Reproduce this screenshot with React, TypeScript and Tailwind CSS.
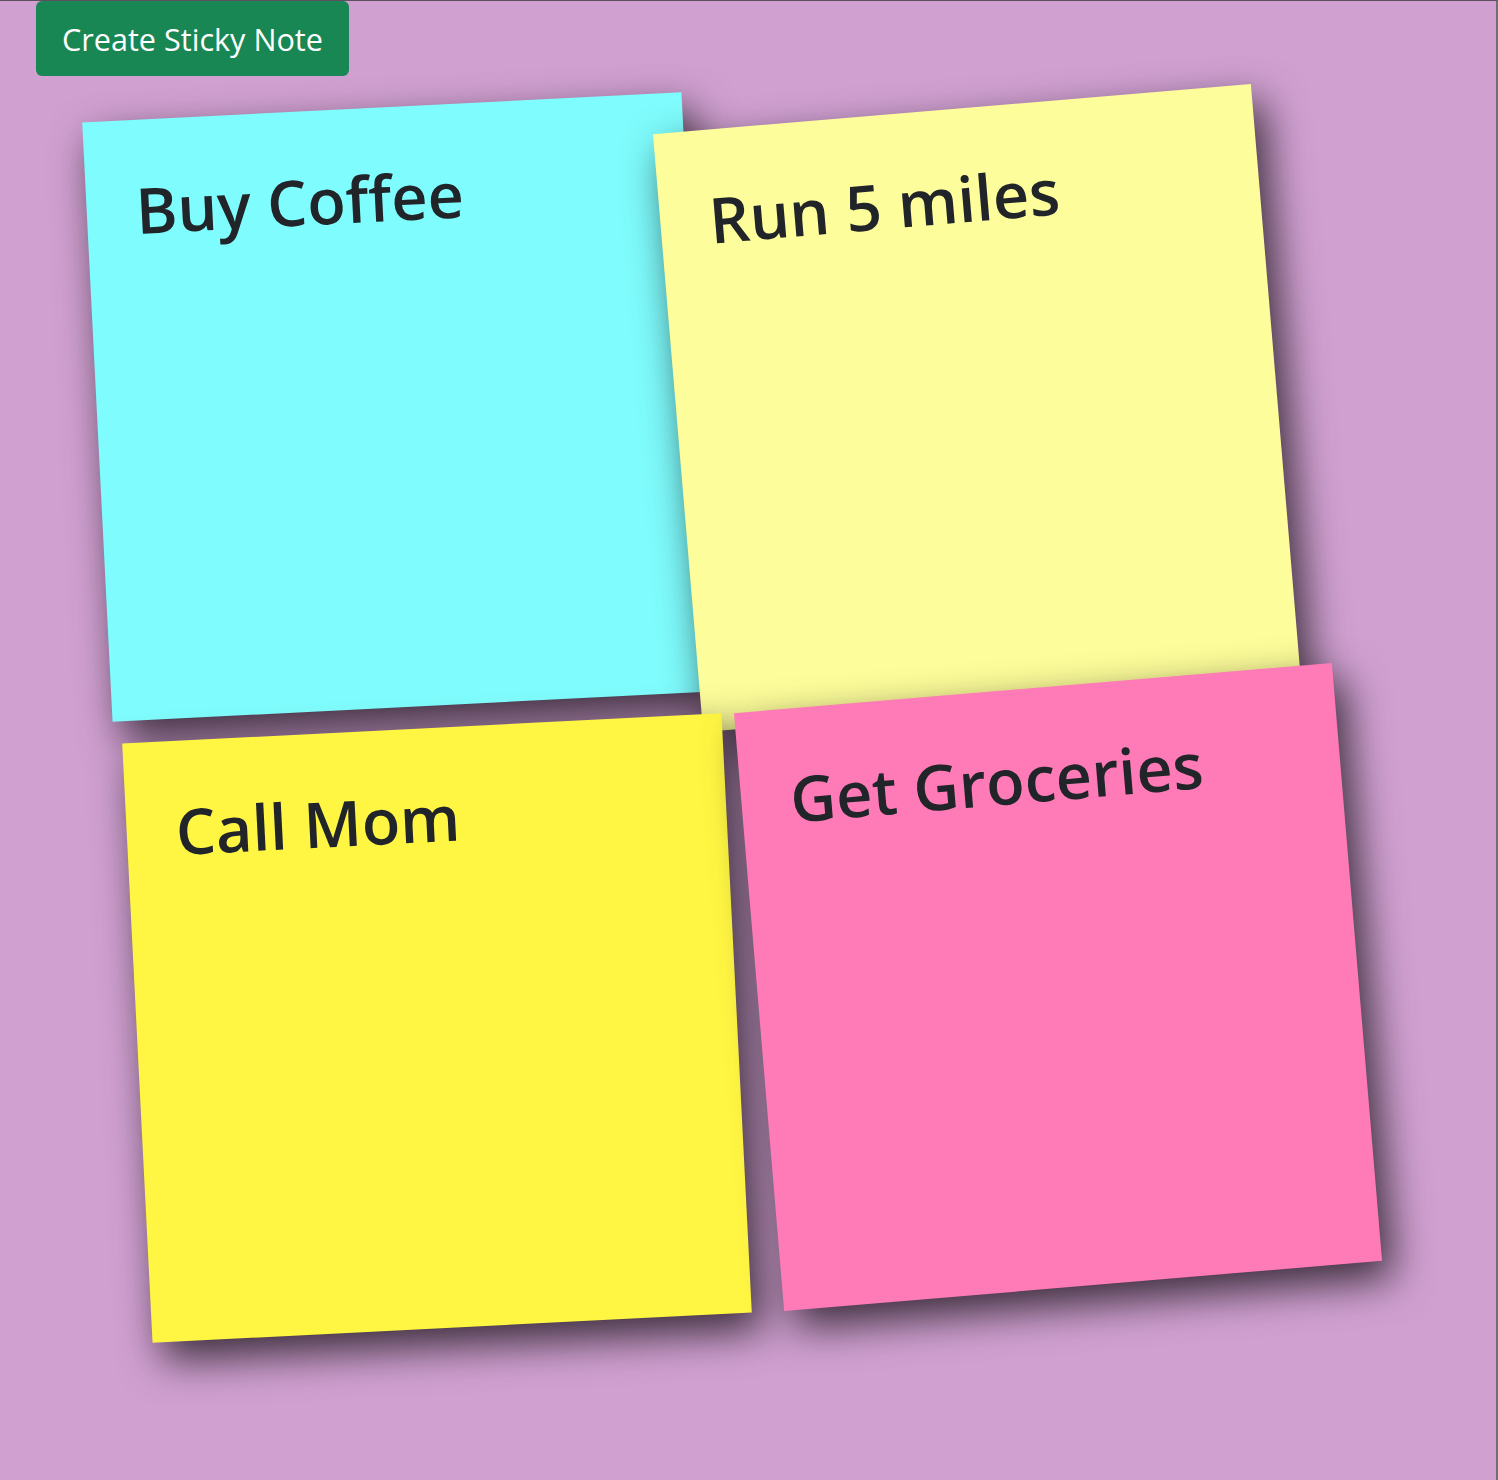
import React from "react";

type Note = {
  text: string;
  color: string;
  pos: string;
  tilt: string;
};

const notes: Note[] = [
  { text: "Buy Coffee", color: "bg-[#7ffcfd]", pos: "left-[97px] top-[106px]", tilt: "rotate-[-2.9deg]" },
  { text: "Run 5 miles", color: "bg-[#fdfd9b]", pos: "left-[677px] top-[107px]", tilt: "rotate-[-4.8deg]" },
  { text: "Call Mom", color: "bg-[#fff643]", pos: "left-[137px] top-[727px]", tilt: "rotate-[-2.9deg]" },
  { text: "Get Groceries", color: "bg-[#ff7bb7]", pos: "left-[758px] top-[686px]", tilt: "rotate-[-4.8deg]" },
];

function StickyNote({ note }: { note: Note }) {
  return (
    <div
      className={`absolute h-[600px] w-[600px] pl-[49px] pt-[58px] shadow-[10px_18px_42px_rgba(0,0,0,0.72)] ${note.color} ${note.pos} ${note.tilt}`}
    >
      <h2 className="text-[63px] font-semibold leading-none text-[#212529]">{note.text}</h2>
    </div>
  );
}

export default function App() {
  return (
    <div
      className="relative h-[1480px] w-full overflow-hidden border-t border-r-2 border-t-[#5e5060] border-r-[#6e6e6e] bg-[#d0a0d1]"
      style={{ fontFamily: '"Open Sans", "Noto Sans", sans-serif' }}
    >
      <div className="pl-9">
        <button className="h-[75px] rounded-md bg-[#198754] px-[26px] pt-[2px] text-[30.6px] text-white">
          Create Sticky Note
        </button>
      </div>
      {notes.map((n) => (
        <StickyNote key={n.text} note={n} />
      ))}
    </div>
  );
}
